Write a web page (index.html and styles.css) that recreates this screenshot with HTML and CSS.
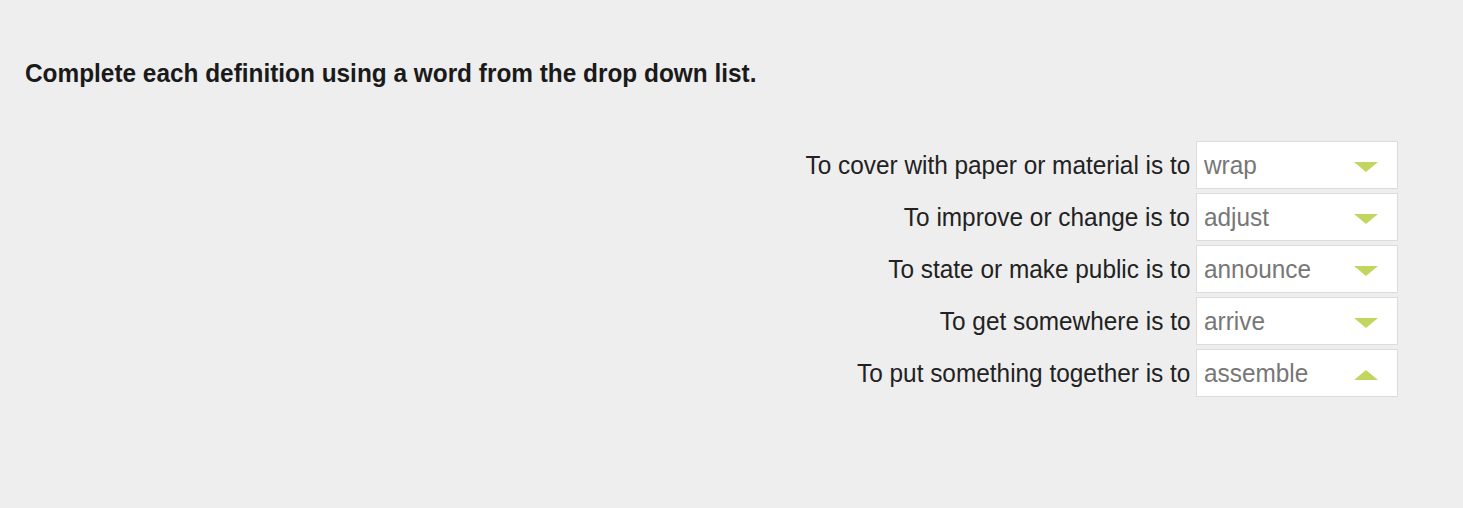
FILE: index.html
```html
<!DOCTYPE html>
<html>
<head>
<meta charset="utf-8">
<link rel="stylesheet" href="styles.css">
</head>
<body>
<div class="page">
  <h1 class="title"><span class="squeeze left">Complete each definition using a word from the drop down list.</span></h1>
  <div class="rows">
    <div class="row"><span class="label">To cover with paper or material is to</span><div class="select"><span class="value">wrap</span><span class="arrow down"></span></div></div>
    <div class="row"><span class="label">To improve or change is to</span><div class="select"><span class="value">adjust</span><span class="arrow down"></span></div></div>
    <div class="row"><span class="label">To state or make public is to</span><div class="select"><span class="value">announce</span><span class="arrow down"></span></div></div>
    <div class="row"><span class="label">To get somewhere is to</span><div class="select"><span class="value">arrive</span><span class="arrow down"></span></div></div>
    <div class="row"><span class="label">To put something together is to</span><div class="select"><span class="value">assemble</span><span class="arrow up"></span></div></div>
  </div>
</div>
</body>
</html>
```

FILE: styles.css
```css
html, body {
  margin: 0;
  padding: 0;
  background: #eeeeee;
}
body {
  font-family: "Liberation Sans", Arial, sans-serif;
  color: #222;
}
.page {
  padding: 59px 65px 0 25px;
}
.title {
  margin: 0;
  font-size: 26.5px;
  font-weight: bold;
  line-height: 28px;
  color: #1a1a1a;
  white-space: nowrap;
}
.squeeze {
  display: inline-block;
  transform: scaleX(0.92);
}
.squeeze.left {
  transform-origin: left center;
}
.rows {
  margin-top: 54px;
  display: flex;
  flex-direction: column;
  align-items: flex-end;
  gap: 4px;
}
.row {
  display: flex;
  align-items: center;
  gap: 6px;
}
.label {
  font-size: 26.5px;
  color: #222;
  transform: scaleX(0.92);
  transform-origin: right center;
  white-space: nowrap;
}
.select {
  box-sizing: border-box;
  width: 202px;
  height: 48px;
  background: #fff;
  border: 1px solid #dcdcdc;
  display: flex;
  align-items: center;
  justify-content: space-between;
  padding: 0 19px 0 7px;
}
.value {
  font-size: 26.5px;
  color: #777;
  transform: scaleX(0.92);
  transform-origin: left center;
}
.arrow {
  width: 0;
  height: 0;
  border-left: 12px solid transparent;
  border-right: 12px solid transparent;
  margin-top: 4px;
}
.arrow.down {
  border-top: 10px solid #c2d65f;
}
.arrow.up {
  border-bottom: 10px solid #c2d65f;
}
```
